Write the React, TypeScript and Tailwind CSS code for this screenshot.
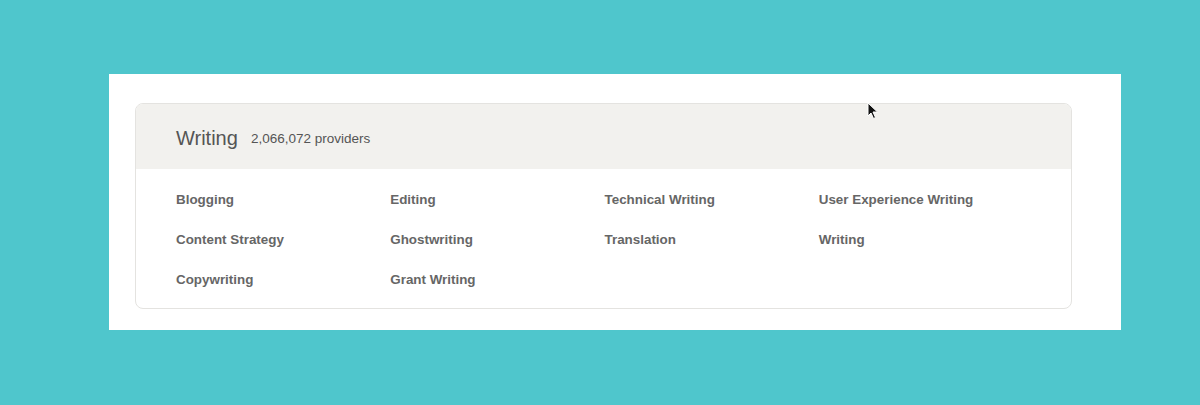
const skills = [
  'Blogging',
  'Editing',
  'Technical Writing',
  'User Experience Writing',
  'Content Strategy',
  'Ghostwriting',
  'Translation',
  'Writing',
  'Copywriting',
  'Grant Writing',
];

function Cursor() {
  return (
    <svg
      className="absolute left-[867px] top-[102px]"
      width="12"
      height="18"
      viewBox="0 0 12 18"
    >
      <path
        d="M1 1 L1 14 L4 11 L6.5 16.5 L8.5 15.5 L6 10 L10.5 10 Z"
        fill="#111"
        stroke="#fff"
        strokeWidth="1"
        strokeLinejoin="round"
      />
    </svg>
  );
}

export default function App() {
  return (
    <div className="relative h-[405px] w-[1200px] bg-[#4fc6cc] pt-[74px] pl-[109px] font-['Liberation_Sans',Arial,sans-serif]">
      <div className="w-[1012px] bg-white pt-[29px] pb-[21px] pl-[26px] pr-[49px]">
        <div className="overflow-hidden rounded-lg border border-[#e4e3e0]">
          <div className="flex h-[65px] items-center gap-[13px] bg-[#f2f1ee] px-10">
            <span className="pt-[2px] text-[20px] text-[#555]">Writing</span>
            <span className="pt-[6px] text-[13.5px] text-[#555]">2,066,072 providers</span>
          </div>
          <div className="grid grid-cols-4 gap-y-5 pl-10 pr-[38px] pt-[21px] pb-[18px]">
            {skills.map((s) => (
              <a key={s} className="h-5 text-[13.4px] leading-5 font-bold text-[#666]">
                {s}
              </a>
            ))}
          </div>
        </div>
      </div>
      <Cursor />
    </div>
  );
}
